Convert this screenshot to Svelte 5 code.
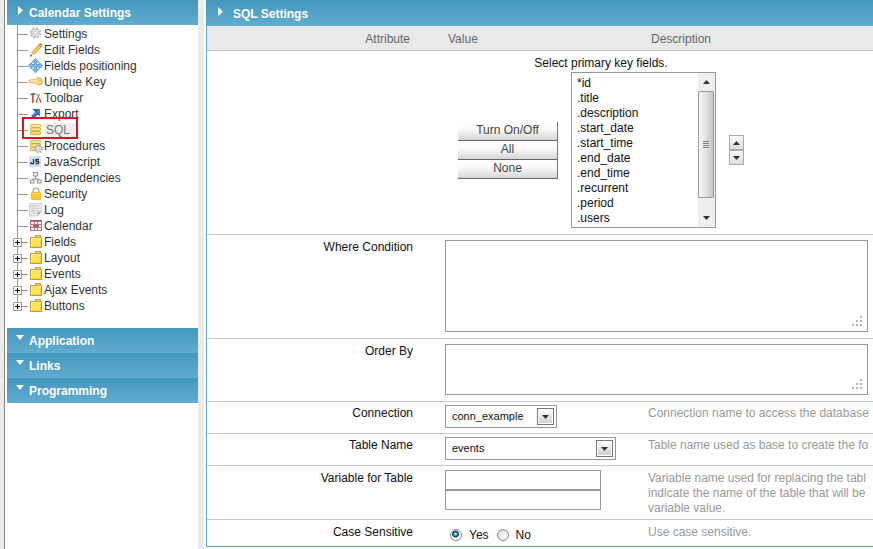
<script>
  const items = [
    { name: 'Settings', icon: 'gear' },
    { name: 'Edit Fields', icon: 'pencil' },
    { name: 'Fields positioning', icon: 'move' },
    { name: 'Unique Key', icon: 'key' },
    { name: 'Toolbar', icon: 'tools' },
    { name: 'Export', icon: 'export' },
    { name: 'SQL', icon: 'db', current: true },
    { name: 'Procedures', icon: 'dbgear' },
    { name: 'JavaScript', icon: 'js' },
    { name: 'Dependencies', icon: 'deps' },
    { name: 'Security', icon: 'lock' },
    { name: 'Log', icon: 'log' },
    { name: 'Calendar', icon: 'calendar' },
    { name: 'Fields', icon: 'folder', branch: true },
    { name: 'Layout', icon: 'folder', branch: true },
    { name: 'Events', icon: 'folder', branch: true },
    { name: 'Ajax Events', icon: 'folder', branch: true },
    { name: 'Buttons', icon: 'folder', branch: true }
  ];
  const sections = ['Application', 'Links', 'Programming'];
  const keyFields = ['*id', '.title', '.description', '.start_date', '.start_time', '.end_date', '.end_time', '.recurrent', '.period', '.users'];
  let caseSensitive = $state('yes');
</script>

{#snippet disks()}
  <g stroke="#cf9a2c" stroke-width=".7">
    <rect x="1.3" y="2.3" width="10.4" height="3.2" rx="1.4" fill="#fbe27c" />
    <rect x="1.3" y="5.9" width="10.4" height="3.2" rx="1.4" fill="#f9d460" />
    <rect x="1.3" y="9.5" width="10.4" height="3.2" rx="1.4" fill="#f5c645" />
  </g>
  <path d="M2.5 3.5h8M2.5 7.1h8M2.5 10.7h8" stroke="#fff3b5" stroke-width=".9" />
{/snippet}

{#snippet icon(kind)}
  <svg class="icon" viewBox="0 0 15 16" fill="none" aria-hidden="true">
    {#if kind === 'gear'}
      <circle cx="6.5" cy="7" r="4.9" stroke="#bbb" stroke-width="1.8" stroke-dasharray="2.2 1.65" />
      <circle cx="6.5" cy="7" r="3.9" fill="#ececec" stroke="#bdbdbd" />
      <circle cx="6.5" cy="7" r="1.7" fill="#fff" stroke="#b0b0b0" stroke-width=".8" />
    {:else if kind === 'pencil'}
      <path d="M2.6 10.6 9.7 2.8l2.4 2.2-7.2 7.8z" fill="#f4b63e" stroke="#c9862a" stroke-width=".6" />
      <path d="m4 11 7-7.4" stroke="#ffe59a" stroke-width=".9" />
      <path d="m9.7 2.8 1-1.2q1.2-.6 2 .3.9.9.2 2l-.8 1.1z" fill="#e79b62" stroke="#b9761a" stroke-width=".5" />
      <path d="m2.6 10.6-1.3 3.7 3.6-1.5z" fill="#f6dfb5" />
      <path d="m1.7 12.5-.8 2.2 2.1-.8z" fill="#222" />
    {:else if kind === 'move'}
      <path d="M6.5.4 9.7 3.9H7.6v2.6h2.6V4.4l3.5 3.2-3.5 3.2V8.7H7.6v2.6h2.1l-3.2 3.5-3.2-3.5h2.1V8.7H2.8v2.1L-.7 7.6l3.5-3.2v2.1h2.6V3.9H3.3z" fill="#7fbdf0" stroke="#3b80c4" stroke-width=".7" />
    {:else if kind === 'key'}
      <path d="M6.4 5.6Q7.3 3.7 10 3.7q3.6.2 3.7 3.7-.2 3.5-3.7 3.7-2.7-.1-3.5-1.8H5.2l-.8-.7-.8.8-1-.8-1 .8L.3 8.2V6z" fill="#f8d878" stroke="#d9a44c" stroke-width=".8" />
      <path d="M1 7h7" stroke="#fff3c2" />
      <circle cx="11" cy="7.3" r="1.1" fill="#fff" stroke="#d2983b" stroke-width=".6" />
    {:else if kind === 'tools'}
      <path d="M.8 5.2Q1.4 2.7 4.3 3h2v2H4.8v1.2h-2V5z" fill="#777" />
      <path d="M3.8 6v6.8" stroke="#bc5a2c" stroke-width="1.8" />
      <path d="M7.6 3.2 9.2 6.7l1.8-3M9.2 6.7 8 9M9.5 7l1.3 2.5" stroke="#969696" stroke-width="1.1" />
      <path d="m8.4 8.3-.9 4.5M10.5 8.3l1.5 4.5" stroke="#c74f38" stroke-width="1.2" />
    {:else if kind === 'export'}
      <path d="M3.4 3h7.4v7.6L8.7 8.5l-4 4.1-2.6-2.5 4-4.1z" fill="#2d62cc" />
      <path d="m3.7 10 5.6-5.5" stroke="#69a4ed" />
    {:else if kind === 'db'}
      {@render disks()}
    {:else if kind === 'dbgear'}
      {@render disks()}
      <circle cx="9.5" cy="10.8" r="3.7" stroke="#aaa" stroke-width="1.6" stroke-dasharray="1.7 1.2" />
      <circle cx="9.5" cy="10.8" r="2.8" fill="#eee" stroke="#b5b5b5" />
      <circle cx="9.5" cy="10.8" r="1.1" fill="#fff" stroke="#aaa" stroke-width=".6" />
    {:else if kind === 'js'}
      <rect x="0" y="2" width="12" height="11" fill="#d2e2f2" />
      <path d="M4.5 5v4.7H2V8M10 5.5H7v2h2.5v2.2H6.5" stroke="#27364d" stroke-width="1.3" />
    {:else if kind === 'deps'}
      <g stroke="#929292" fill="#f5f5f5">
        <path d="M6.5 6v3M3.5 10.5V9h6.5v1.5" />
        <rect x="4.5" y="2.5" width="4" height="3.5" />
        <rect x="1.5" y="10" width="3.5" height="3" />
        <rect x="8.5" y="10" width="3.5" height="3" />
      </g>
    {:else if kind === 'lock'}
      <path d="M4 7V5q.1-2.8 3-2.8T10 5v2" stroke="#b5b5a8" stroke-width="1.4" />
      <rect x="2.3" y="6.4" width="9.4" height="7.2" rx="1" fill="#fbcb1b" stroke="#e3ab0c" stroke-width=".7" />
      <path d="M3 7.5h8" stroke="#ffe46b" />
    {:else if kind === 'log'}
      <path d="M.5 1.5h12V9.5L8.5 14h-8z" fill="#ececec" stroke="#c4c4c4" stroke-width=".7" />
      <path d="M2 4h9M2 6.5h9M2 9h7M2 11.5h5M5 2.5v10M8 2.5v8" stroke="#d6d0d0" stroke-width=".8" />
      <path d="m8.3 14 .5-4.2 3.9-.4z" fill="#aaa" />
      <path d="M2.3 4h1.6M2.3 9h1.6" stroke="#d8a0a0" />
    {:else if kind === 'calendar'}
      <rect x="1" y="2" width="12" height="11" fill="#b07e82" />
      <path d="M1 2.5h12" stroke="#96585d" />
      <path d="M2 5h3M6 5h2M9 5h3M2 8h2M10 8h2M2 11h3M6 11h2M9 11h3" stroke="#f8eeee" stroke-width="2" />
      <path d="M5 8h4" stroke="#a8555c" stroke-width="2" />
    {:else}
      <path d="M1.5 3.5h5v-2h5v2h1v10h-11z" fill="#fbe45b" stroke="#c39a28" />
      <path d="M2.5 12V4.5h9" stroke="#fff7a8" />
      <path d="M6.5 3.5h5" stroke="#c39a28" />
      <path d="M3 12.3h8.5V6" stroke="#f4cd32" />
    {/if}
  </svg>
{/snippet}

{#snippet arrow(dir)}
  <svg class="arrow" viewBox="0 0 7 4" aria-hidden="true">
    <path d={dir === 'up' ? 'M0 4 3.5 0 7 4z' : 'M0 0h7L3.5 4z'} fill="#333" />
  </svg>
{/snippet}

{#snippet grip()}
  <svg class="grip" viewBox="0 0 10 10" aria-hidden="true">
    <path d="M8 0h2v2H8zM4 4h2v2H4zM8 4h2v2H8zM0 8h2v2H0zM4 8h2v2H4zM8 8h2v2H8z" fill="#b5b5b5" />
  </svg>
{/snippet}

<div class="page">
  <nav class="sidebar">
    <button class="bar">
      <svg class="mark" viewBox="0 0 8 10" aria-hidden="true"><path d="M2 0v9l5-4.5z" fill="#fff" /></svg>
      Calendar Settings
    </button>
    <ul class="tree">
      {#each items as item}
        <li class:branch={item.branch}>
          {#if item.branch}
            <button class="toggle" aria-label={'Expand ' + item.name}>
              <svg viewBox="0 0 9 9" aria-hidden="true"><path d="M.5.5h8v8h-8z" fill="#fff" stroke="#999" /><path d="M2 4.5h5M4.5 2v5" stroke="#000" /></svg>
            </button>
          {/if}
          <span class="twig"></span>
          <a href="#{item.icon}" class:current={item.current}>
            {@render icon(item.icon)}<span class="name">{item.name}</span>
          </a>
        </li>
      {/each}
    </ul>
    {#each sections as section}
      <button class="bar">
        <svg class="mark" viewBox="0 0 8 10" aria-hidden="true"><path d="M0 1h8L4 6z" fill="#fff" /></svg>
        {section}
      </button>
    {/each}
  </nav>

  <main class="panel">
    <h1 class="bar title">
      <svg class="mark" viewBox="0 0 8 10" aria-hidden="true"><path d="M2 0v9l5-4.5z" fill="#fff" /></svg>
      SQL Settings
    </h1>
    <table>
      <colgroup><col class="c-attr" /><col class="c-value" /><col /></colgroup>
      <thead>
        <tr><th class="attr">Attribute</th><th class="value">Value</th><th class="about">Description</th></tr>
      </thead>
      <tbody>
        <tr>
          <td></td>
          <td colspan="2">
            <div class="picker">
              <label for="keys">Select primary key fields.</label>
              <div class="picker-row">
                <div class="stack">
                  <button>Turn On/Off</button>
                  <button>All</button>
                  <button>None</button>
                </div>
                <div class="list">
                  <select id="keys" multiple size="10">
                    {#each keyFields as field}<option>{field}</option>{/each}
                  </select>
                  <div class="scroll" aria-hidden="true">
                    <span class="end">{@render arrow('up')}</span>
                    <span class="thumb"><i></i></span>
                    <span class="end">{@render arrow('down')}</span>
                  </div>
                </div>
                <div class="order">
                  <button aria-label="Move up">{@render arrow('up')}</button>
                  <button aria-label="Move down">{@render arrow('down')}</button>
                </div>
              </div>
            </div>
          </td>
        </tr>
        <tr>
          <td class="attr low"><label for="where">Where Condition</label></td>
          <td colspan="2"><div class="area"><textarea id="where" class="tall"></textarea>{@render grip()}</div></td>
        </tr>
        <tr>
          <td class="attr low"><label for="orderby">Order By</label></td>
          <td colspan="2"><div class="area"><textarea id="orderby"></textarea>{@render grip()}</div></td>
        </tr>
        <tr>
          <td class="attr"><label for="conn">Connection</label></td>
          <td><div class="drop narrow"><select id="conn"><option>conn_example</option></select><span class="knob">{@render arrow('down')}</span></div></td>
          <td class="desc">Connection name to access the database</td>
        </tr>
        <tr>
          <td class="attr"><label for="tbl">Table Name</label></td>
          <td><div class="drop"><select id="tbl"><option>events</option></select><span class="knob">{@render arrow('down')}</span></div></td>
          <td class="desc">Table name used as base to create the fo</td>
        </tr>
        <tr>
          <td class="attr low"><label for="var1">Variable for Table</label></td>
          <td>
            <div class="fields">
              <input id="var1" type="text" />
              <input type="text" aria-label="Table variable value" />
            </div>
          </td>
          <td class="desc low">Variable name used for replacing the tabl<br />indicate the name of the table that will be<br />variable value.</td>
        </tr>
        <tr>
          <td class="attr low">Case Sensitive</td>
          <td class="low">
            <div class="radios">
              <label><input type="radio" name="case" value="yes" bind:group={caseSensitive} />Yes</label>
              <label><input type="radio" name="case" value="no" bind:group={caseSensitive} />No</label>
            </div>
          </td>
          <td class="desc low">Use case sensitive.</td>
        </tr>
      </tbody>
    </table>
  </main>
</div>

<style>
  :global(body) { overflow: hidden; }
  .page, .page *, .page *::before, .page *::after { box-sizing: border-box; }
  .page {
    display: flex;
    min-height: 100vh;
    padding-left: 4px;
    background: #ebebeb;
    font: 12px/15px "Liberation Sans", Arial, sans-serif;
    color: #111;
  }
  button, select, input, textarea { font: inherit; color: inherit; margin: 0; border-radius: 0; }

  .sidebar {
    flex: none;
    width: 194px;
    padding-left: 2px;
    border-left: 1px solid #858585;
    background: #fff;
  }
  .bar {
    display: flex;
    align-items: center;
    width: 100%;
    height: 25px;
    padding: 1px 0 0 9px;
    border: 0;
    background: linear-gradient(#4297bf, #62acd0);
    color: #fff;
    font-weight: bold;
    text-align: left;
  }
  .mark { width: 8px; height: 10px; margin: 0 5px 4px 0; }

  .tree { list-style: none; margin: 0 0 14px; padding: 1px 0 0 6px; }
  .tree li { position: relative; display: flex; align-items: center; height: 16px; padding-left: 4px; }
  .tree li::before { content: ""; position: absolute; left: 4px; top: -1px; bottom: 0; width: 1px; background: #999; }
  .tree li:last-child::before { bottom: 8px; }
  .tree li.branch { padding-left: 0; }
  .twig { width: 11px; height: 1px; background: #999; }
  .branch .twig { width: 6px; }
  .toggle { position: relative; display: flex; width: 9px; height: 9px; padding: 0; border: 0; background: none; }
  .toggle svg { width: 9px; height: 9px; }
  .tree a { display: flex; align-items: center; margin-left: 1px; color: #333; text-decoration: none; }
  .icon { width: 15px; height: 16px; overflow: visible; }
  .current .name { padding: 0 5px 0 2px; background: #eee; color: #777; }
  .current::after { content: ""; position: absolute; left: 9px; top: -5px; width: 56px; height: 22px; border: 2px solid #d8141c; }

  .panel {
    flex: 1;
    min-width: 0;
    margin-left: 6px;
    padding-left: 2px;
    background: #fff;
    overflow: hidden;
  }
  .title { height: 26px; margin: 0; padding: 2px 0 0 10px; font-size: 12px; }
  .title .mark { margin-right: 9px; }
  table {
    width: 100%;
    table-layout: fixed;
    border-collapse: separate;
    border-spacing: 0;
    border-left: 1px solid #62a6c4;
    border-bottom: 1px solid #62a6c4;
  }
  .c-attr { width: 238px; }
  .c-value { width: 200px; }
  th, td { padding: 4px 0 0; text-align: left; vertical-align: top; font-weight: normal; white-space: nowrap; }
  th { height: 25px; padding: 2px 0 0; border-bottom: 1px solid #c4c4c4; background: #e9e9e9; color: #666; vertical-align: middle; }
  th.value { padding-left: 3px; }
  th.about { padding-left: 6px; }
  td { border-bottom: 1px solid #c6cccd; }
  tr:last-child td { border-bottom: 0; height: 26px; }
  .attr { padding-right: 32px; text-align: right; }
  th.attr { padding-right: 35px; }
  .desc { padding-left: 3px; color: #999; }
  .low { padding-top: 5px; }

  .picker { display: inline-flex; flex-direction: column; align-items: center; gap: 1px; padding: 1px 0 6px 13px; vertical-align: top; }
  .picker-row { display: flex; align-items: center; gap: 13px; }
  .stack { display: flex; flex-direction: column; width: 100px; }
  .stack button {
    height: 19px;
    padding: 0;
    border: 0;
    border-right: 1px solid #777;
    border-bottom: 1px solid #666;
    background: linear-gradient(#fff, #fbfbfb 40%, #d6d6d6);
    color: #444;
  }
  .list { display: flex; width: 145px; height: 156px; border: 1px solid #999; }
  .list select { flex: 1; min-width: 0; padding: 3px 0 0; border: 0; outline: 0; background: #fff; overflow: hidden; scrollbar-width: none; }
  .list option { min-height: 15px; height: 15px; padding: 0 5px; line-height: 15px; }
  .scroll { display: flex; flex-direction: column; width: 17px; background: #efefef; }
  .end { display: flex; height: 18px; align-items: center; justify-content: center; }
  .scroll .end:last-child { margin-top: auto; }
  .thumb { display: flex; align-items: center; justify-content: center; height: 107px; margin-right: 1px; border: 1px solid #999; border-radius: 1px; background: linear-gradient(90deg, #f6f6f6, #e4e4e4 45%, #c6c6c6); }
  .thumb i { width: 6px; height: 8px; background: repeating-linear-gradient(#777 0 1px, #eee 1px 2px); }
  .arrow { width: 7px; height: 4px; }
  .order { display: flex; flex-direction: column; }
  .order button { display: flex; align-items: center; justify-content: center; width: 15px; height: 15px; padding: 0; border: 1px solid #aaa; background: linear-gradient(#fafafa, #ddd); }

  .area { position: relative; display: flex; padding: 1px 5px 6px 0; }
  .area textarea { flex: 1; min-width: 0; height: 51px; padding: 2px; border: 1px solid #999; background: #fff; resize: none; outline: 0; }
  .area .tall { height: 92px; }
  .grip { position: absolute; right: 11px; bottom: 12px; width: 10px; height: 10px; }

  .drop { position: relative; width: 171px; height: 28px; margin-top: -1px; }
  .narrow { width: 112px; }
  .drop select { display: block; width: 100%; height: 23px; padding: 0 20px 1px 6px; border: 1px solid #999; appearance: none; background: #fff; font-size: 11px; }
  .knob { position: absolute; right: 3px; top: 3px; display: flex; align-items: center; justify-content: center; width: 17px; height: 17px; border: 1px solid #777; background: linear-gradient(#fff, #ccc); box-shadow: inset 0 0 0 1px #fff; pointer-events: none; }

  .fields { display: flex; flex-direction: column; width: 156px; padding-bottom: 9px; }
  .fields input { height: 20px; padding: 1px 3px; border: 1px solid #999; outline: 0; }

  .radios { display: flex; gap: 8px; padding: 3px 0 0 5px; }
  .radios label { display: flex; align-items: center; gap: 7px; }
  .radios input {
    appearance: none;
    width: 12px;
    height: 12px;
    margin: 0 0 2px;
    border: 1px solid #8a8a8a;
    border-radius: 50%;
    background: radial-gradient(circle at 60% 60%, #fafafa, #d4d4d4);
  }
  .radios input:checked { background: radial-gradient(circle at 45% 40%, #8fd8f5 0 1px, #1a6f9c 2px, #0d3f5f 3px, #fff 4px); }
</style>
